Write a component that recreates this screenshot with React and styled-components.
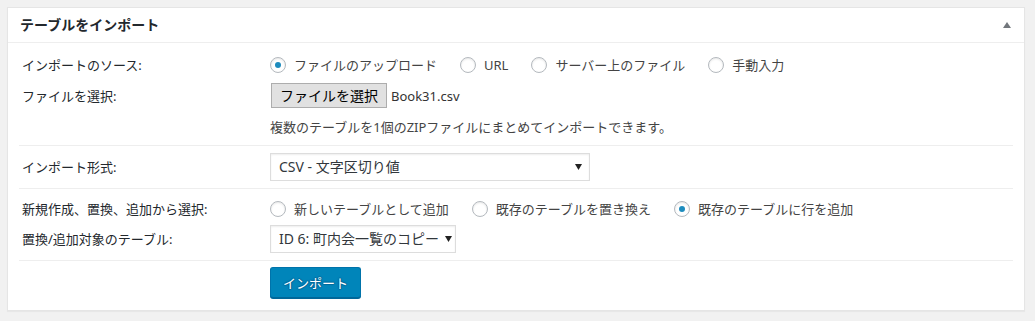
import React from 'react';
import styled, { createGlobalStyle } from 'styled-components';

const GlobalStyle = createGlobalStyle`
  html, body {
    margin: 0;
    background: #f1f1f1;
  }
  body {
    padding: 7px 10px 11px 7px;
    font-family: "Noto Sans", "Noto Sans CJK JP", sans-serif;
    color: #444;
  }
`;

const Panel = styled.div`
  background: #fff;
  border: 1px solid #e5e5e5;
  box-shadow: 0 1px 1px rgba(0, 0, 0, 0.04);
`;

const Header = styled.div`
  height: 34px;
  display: flex;
  align-items: center;
  justify-content: space-between;
  padding: 0 13px 0 12px;
  border-bottom: 1px solid #eee;
`;

const Title = styled.h2`
  margin: 0;
  font-size: 14px;
  font-weight: 700;
  color: #23282d;
  line-height: 1;
`;

const Toggle = styled.svg`
  width: 8px;
  height: 6px;
  fill: #72777c;
`;

const Body = styled.div`
  padding: 0 11px 0 11px;
`;

const Section = styled.div`
  padding: ${p => p.$pad || '7px 0'};
  border-bottom: ${p => (p.$last ? 'none' : '1px solid #eee')};
  display: flex;
  flex-direction: column;
  gap: ${p => p.$gap || '0px'};
`;

const Row = styled.div`
  display: grid;
  grid-template-columns: 251px 1fr;
  align-items: center;
  min-height: ${p => p.$h || 20}px;
  margin-top: ${p => p.$mt || 0}px;
`;

const Label = styled.div`
  padding-left: 3px;
  font-size: 13px;
  line-height: 20px;
  color: #23282d;
`;

const Field = styled.div`
  display: flex;
  align-items: center;
  font-size: 13px;
  line-height: 20px;
  color: #444;
`;

const Option = styled.label`
  display: flex;
  align-items: center;
  gap: 8px;
  margin-right: 23px;
  white-space: nowrap;
`;

const Radio = styled.span`
  width: 16px;
  height: 16px;
  box-sizing: border-box;
  border-radius: 50%;
  border: 1px solid #b4b9be;
  background: #fff;
  box-shadow: inset 0 1px 2px rgba(0, 0, 0, 0.1);
  display: flex;
  align-items: center;
  justify-content: center;
  &::before {
    content: '';
    width: 6px;
    height: 6px;
    border-radius: 50%;
    background: ${p => (p.$checked ? '#1e8cbe' : 'transparent')};
  }
`;

const FileButton = styled.button`
  height: 25px;
  box-sizing: border-box;
  padding: 0 8px;
  margin-left: 1px;
  font-family: inherit;
  font-size: 14px;
  color: #000;
  background: #e1e1e1;
  border: 1px solid #adadad;
  border-radius: 0;
  line-height: 1;
`;

const FileName = styled.span`
  margin-left: 4px;
  font-size: 13px;
  color: #333;
`;

const Description = styled.div`
  font-size: 13px;
  line-height: 20px;
  color: #444;
`;

const Select = styled.div`
  width: ${p => p.$w}px;
  height: 28px;
  box-sizing: border-box;
  border: 1px solid #ddd;
  box-shadow: inset 0 1px 2px rgba(0, 0, 0, 0.07);
  background: #fff;
  display: flex;
  align-items: center;
  justify-content: space-between;
  gap: 6px;
  padding: 0 7px 0 8px;
  font-size: 14px;
  color: #32373c;
  white-space: nowrap;
  overflow: hidden;
`;

const Arrow = styled.svg`
  width: 7px;
  height: 6px;
  fill: #222;
  flex: none;
`;

const Footer = styled.div`
  padding: 6px 0 12px 251px;
`;

const PrimaryButton = styled.button`
  height: 31px;
  padding: 0 12px 1px;
  font-family: inherit;
  font-size: 13px;
  color: #fff;
  background: #0085ba;
  border: 1px solid #0073aa;
  border-bottom-color: #006799;
  border-radius: 3px;
  box-shadow: 0 1px 0 #006799;
  text-shadow: 0 -1px 1px #006799, 1px 0 1px #006799, 0 1px 1px #006799, -1px 0 1px #006799;
`;

const RadioGroup = ({ options, checked }) => (
  <Field>
    {options.map((o, i) => (
      <Option key={o}>
        <Radio $checked={i === checked} />
        {o}
      </Option>
    ))}
  </Field>
);

const Dropdown = ({ width, children }) => (
  <Select $w={width}>
    <span>{children}</span>
    <Arrow viewBox="0 0 7 6">
      <path d="M0 0h7L3.5 6z" />
    </Arrow>
  </Select>
);

export default function App() {
  return (
    <>
      <GlobalStyle />
      <Panel>
        <Header>
          <Title>テーブルをインポート</Title>
          <Toggle viewBox="0 0 8 6">
            <path d="M4 0l4 6H0z" />
          </Toggle>
        </Header>
        <Body>
          <Section $pad="7px 0 8px">
            <Row $h={30}>
              <Label>インポートのソース:</Label>
              <RadioGroup
                options={['ファイルのアップロード', 'URL', 'サーバー上のファイル', '手動入力']}
                checked={0}
              />
            </Row>
            <Row $h={24} $mt={3}>
              <Label>ファイルを選択:</Label>
              <Field>
                <FileButton>ファイルを選択</FileButton>
                <FileName>Book31.csv</FileName>
              </Field>
            </Row>
            <Row $mt={9}>
              <span />
              <Description>複数のテーブルを1個のZIPファイルにまとめてインポートできます。</Description>
            </Row>
          </Section>
          <Section>
            <Row $h={28}>
              <Label>インポート形式:</Label>
              <Field>
                <Dropdown width={320}>CSV - 文字区切り値</Dropdown>
              </Field>
            </Row>
          </Section>
          <Section $pad="10px 0 7px" $gap="6px">
            <Row>
              <Label>新規作成、置換、追加から選択:</Label>
              <RadioGroup
                options={['新しいテーブルとして追加', '既存のテーブルを置き換え', '既存のテーブルに行を追加']}
                checked={2}
              />
            </Row>
            <Row $h={28}>
              <Label>置換/追加対象のテーブル:</Label>
              <Field>
                <Dropdown width={186}>ID 6: 町内会一覧のコピー</Dropdown>
              </Field>
            </Row>
          </Section>
          <Footer>
            <PrimaryButton>インポート</PrimaryButton>
          </Footer>
        </Body>
      </Panel>
    </>
  );
}
